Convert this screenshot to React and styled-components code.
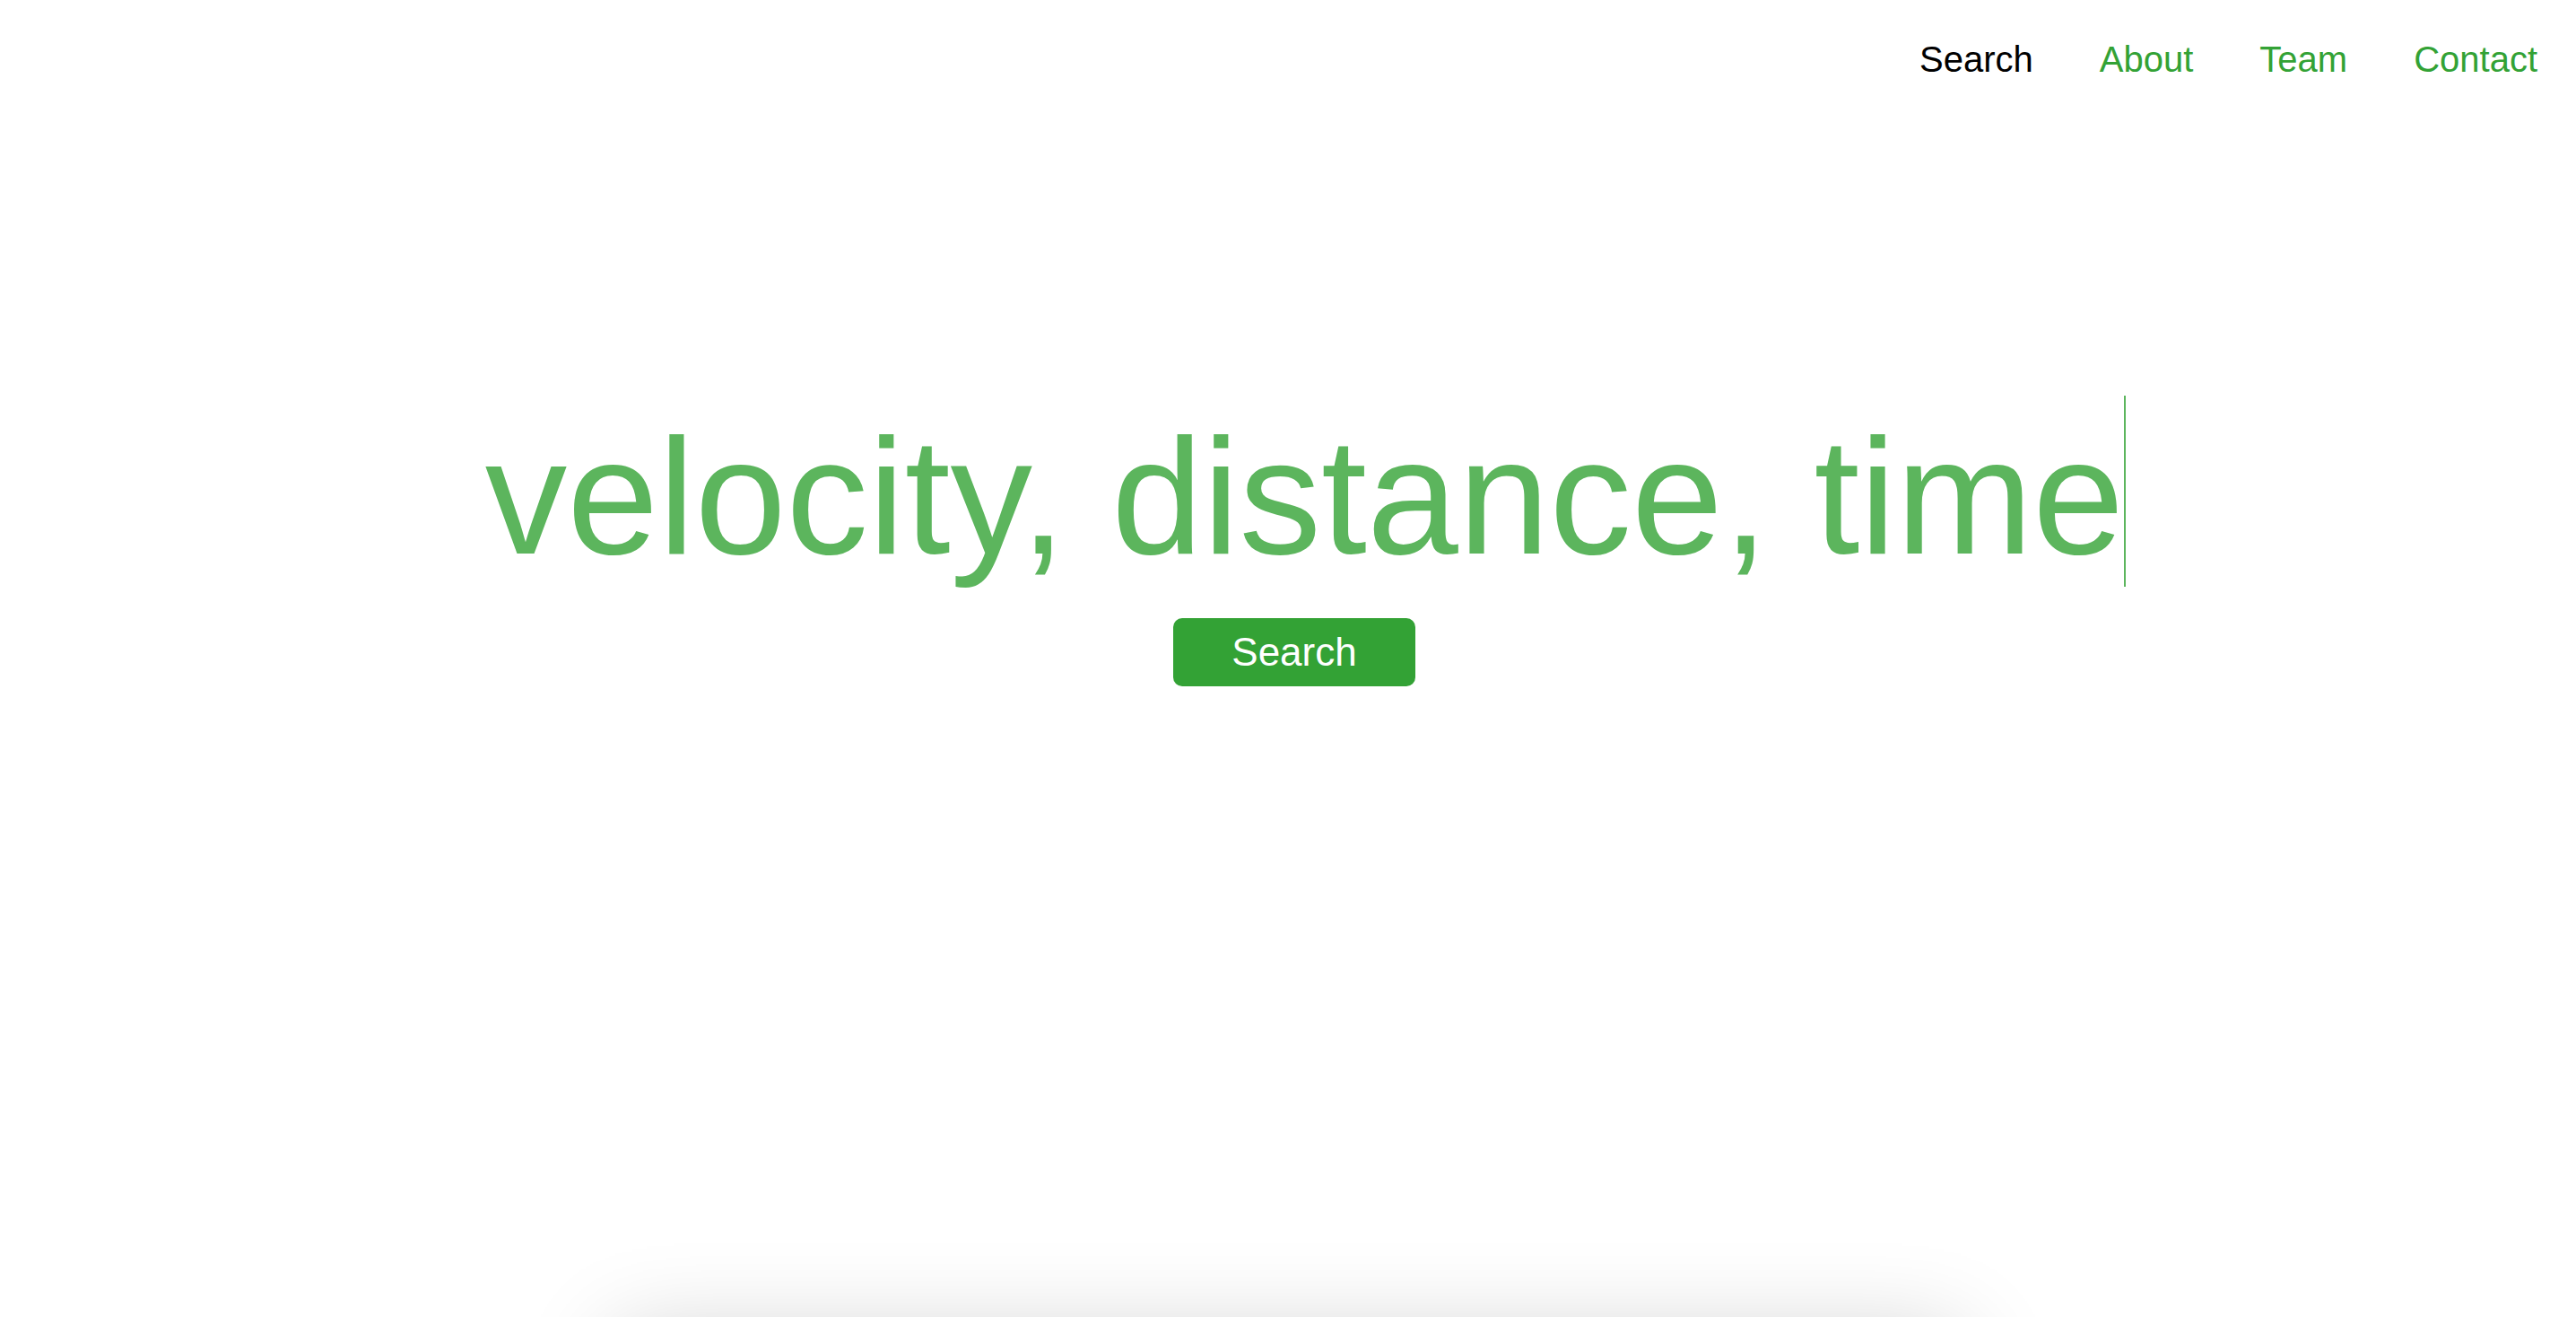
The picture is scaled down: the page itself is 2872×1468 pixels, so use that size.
import React from 'react';
import styled, { createGlobalStyle } from 'styled-components';

const GREEN = '#33a235';

const GlobalStyle = createGlobalStyle`
  html, body {
    margin: 0;
    padding: 0;
    background: #ffffff;
  }
  body {
    font-family: 'Liberation Sans', Arial, Helvetica, sans-serif;
  }
`;

const Page = styled.div`
  height: 100vh;
  overflow: hidden;
  display: flex;
  flex-direction: column;
  background: #ffffff;
`;

const Nav = styled.nav`
  display: flex;
  justify-content: flex-end;
  gap: 74px;
  padding: 43px 43px 0 0;
`;

const NavLink = styled.a`
  font-size: 40px;
  line-height: 46px;
  color: ${(props) => (props.$active ? '#000000' : GREEN)};
  text-decoration: none;
  cursor: pointer;
`;

const Hero = styled.main`
  display: flex;
  flex-direction: column;
  align-items: center;
  margin-top: 358px;
`;

const QueryRow = styled.div`
  display: flex;
  align-items: flex-start;
  padding-left: 39px;
`;

const Query = styled.span`
  font-size: 183px;
  line-height: 213px;
  color: rgba(51, 162, 53, 0.8);
  white-space: pre;
`;

const Caret = styled.span`
  width: 2px;
  height: 213px;
  margin-top: -6px;
  background: rgba(51, 162, 53, 0.8);
`;

const ButtonRow = styled.div`
  display: flex;
  justify-content: center;
  padding-left: 14px;
  margin-top: 29px;
`;

const SearchButton = styled.button`
  height: 76px;
  padding: 0 65px;
  border: none;
  border-radius: 10px;
  background: ${GREEN};
  color: #ffffff;
  font-family: 'Liberation Sans', Arial, Helvetica, sans-serif;
  font-size: 44px;
  line-height: 76px;
  cursor: pointer;
`;

const Results = styled.section`
  flex-shrink: 0;
  align-self: center;
  width: 1500px;
  height: 400px;
  margin-top: 725px;
  background: #ffffff;
  box-shadow: 0 0 100px rgba(0, 0, 0, 0.2);
`;

const links = [
  { label: 'Search', active: true },
  { label: 'About' },
  { label: 'Team' },
  { label: 'Contact' },
];

const App = () => (
  <>
    <GlobalStyle />
    <Page>
      <Nav>
        {links.map((link) => (
          <NavLink key={link.label} $active={link.active}>
            {link.label}
          </NavLink>
        ))}
      </Nav>
      <Hero>
        <QueryRow>
          <Query>velocity, distance, time</Query>
          <Caret />
        </QueryRow>
        <ButtonRow>
          <SearchButton>Search</SearchButton>
        </ButtonRow>
      </Hero>
      <Results />
    </Page>
  </>
);

export default App;
